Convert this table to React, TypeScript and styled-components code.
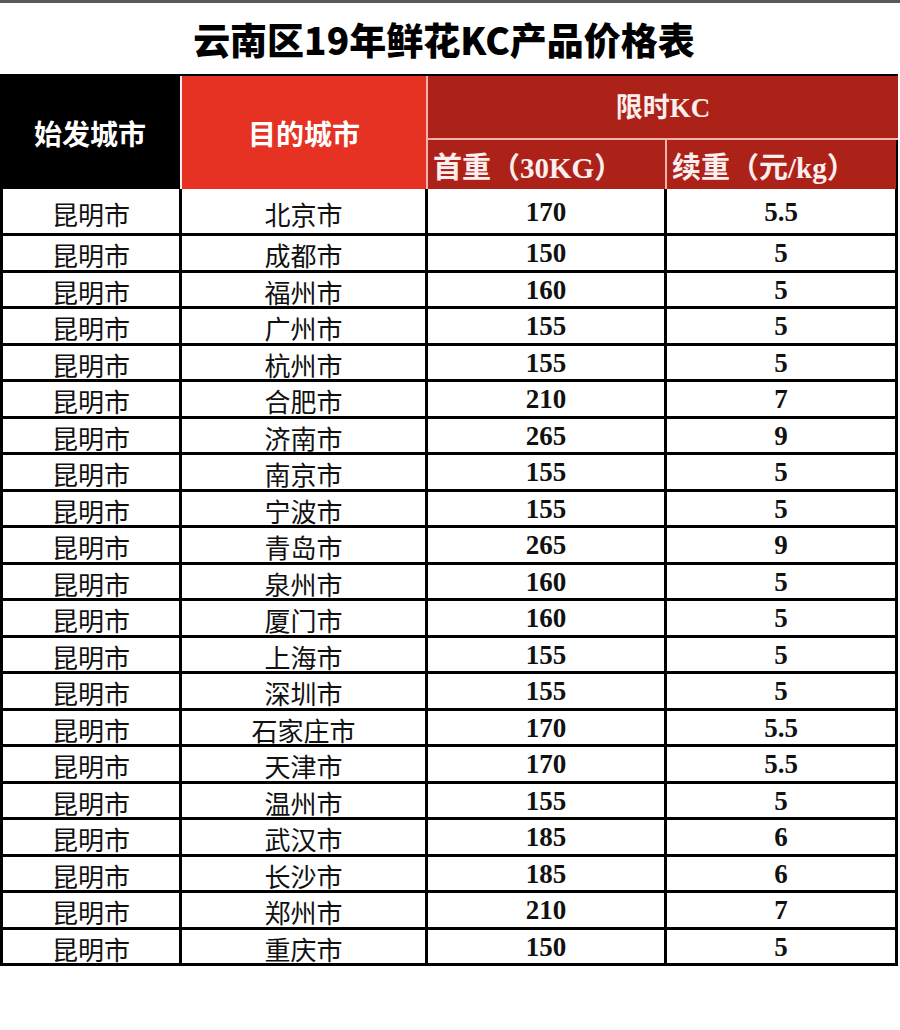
import React from 'react';
import styled, { createGlobalStyle } from 'styled-components';

type Row = { from: string; to: string; first: string; extra: string };

const rows: Row[] = [
  { from: '昆明市', to: '北京市', first: '170', extra: '5.5' },
  { from: '昆明市', to: '成都市', first: '150', extra: '5' },
  { from: '昆明市', to: '福州市', first: '160', extra: '5' },
  { from: '昆明市', to: '广州市', first: '155', extra: '5' },
  { from: '昆明市', to: '杭州市', first: '155', extra: '5' },
  { from: '昆明市', to: '合肥市', first: '210', extra: '7' },
  { from: '昆明市', to: '济南市', first: '265', extra: '9' },
  { from: '昆明市', to: '南京市', first: '155', extra: '5' },
  { from: '昆明市', to: '宁波市', first: '155', extra: '5' },
  { from: '昆明市', to: '青岛市', first: '265', extra: '9' },
  { from: '昆明市', to: '泉州市', first: '160', extra: '5' },
  { from: '昆明市', to: '厦门市', first: '160', extra: '5' },
  { from: '昆明市', to: '上海市', first: '155', extra: '5' },
  { from: '昆明市', to: '深圳市', first: '155', extra: '5' },
  { from: '昆明市', to: '石家庄市', first: '170', extra: '5.5' },
  { from: '昆明市', to: '天津市', first: '170', extra: '5.5' },
  { from: '昆明市', to: '温州市', first: '155', extra: '5' },
  { from: '昆明市', to: '武汉市', first: '185', extra: '6' },
  { from: '昆明市', to: '长沙市', first: '185', extra: '6' },
  { from: '昆明市', to: '郑州市', first: '210', extra: '7' },
  { from: '昆明市', to: '重庆市', first: '150', extra: '5' },
];

const App: React.FC = () => {
  return (
    <Page>
      <GlobalStyle />
      <TopBar />
      <Title>云南区19年鲜花KC产品价格表</Title>
      <Table>
        <colgroup>
          <col style={{ width: 182 }} />
          <col style={{ width: 246 }} />
          <col style={{ width: 239 }} />
          <col style={{ width: 231 }} />
        </colgroup>
        <thead>
          <tr>
            <HeadCell rowSpan={2} $bg="#000000" $right="#f4f0f0">始发城市</HeadCell>
            <HeadCell rowSpan={2} $bg="#e63222" $right="#f2b3aa">目的城市</HeadCell>
            <GroupCell colSpan={2}>限时KC</GroupCell>
          </tr>
          <tr>
            <SubCell $right="#f2b3aa">首重（30KG）</SubCell>
            <SubCell $right="#000000">续重（元/kg）</SubCell>
          </tr>
        </thead>
        <tbody>
          {rows.map((r, i) => (
            <BodyRow key={r.to} $tall={i === 0}>
              <CityCell $first>{r.from}</CityCell>
              <CityCell>{r.to}</CityCell>
              <NumCell>{r.first}</NumCell>
              <NumCell>{r.extra}</NumCell>
            </BodyRow>
          ))}
        </tbody>
      </Table>
    </Page>
  );
};

export default App;

const GlobalStyle = createGlobalStyle`
  html, body {
    margin: 0;
    padding: 0;
    background: #ffffff;
  }
  body {
    font-family: "Noto Sans CJK SC", "Noto Sans", sans-serif;
  }
`;

const Page = styled.div`
  width: 900px;
  height: 1030px;
  background: #ffffff;
  overflow: hidden;
`;

const TopBar = styled.div`
  height: 3px;
  background: #5a5a5a;
`;

const Title = styled.h1`
  margin: 0;
  height: 71px;
  padding: 0 12px 0 0;
  display: flex;
  align-items: center;
  justify-content: center;
  font-family: "Noto Sans CJK SC", sans-serif;
  font-weight: 900;
  font-size: 37px;
  letter-spacing: 0;
  color: #000000;
`;

const Table = styled.table`
  width: 898px;
  table-layout: fixed;
  border-collapse: separate;
  border-spacing: 0;
  border-top: 2px solid #000000;
`;

const HeadCell = styled.th<{ $bg: string; $right: string }>`
  background: ${(p) => p.$bg};
  border-right: 2px solid ${(p) => p.$right};
  color: #ffffff;
  font-family: "Noto Sans CJK SC", sans-serif;
  font-weight: 700;
  font-size: 28px;
  text-align: center;
  vertical-align: middle;
  padding: 0;
`;

const GroupCell = styled.th`
  height: 58px;
  background: #ad2218;
  border-bottom: 2px solid #f2b3aa;
  color: #fbeeee;
  font-family: "Liberation Serif", "Noto Sans CJK SC", serif;
  font-weight: 700;
  font-size: 27px;
  text-align: center;
  vertical-align: middle;
  padding: 0 0 4px;
`;

const SubCell = styled.th<{ $right: string }>`
  height: 49px;
  background: #ad2218;
  border-right: 2px solid ${(p) => p.$right};
  color: #fbeeee;
  font-family: "Liberation Serif", "Noto Sans CJK SC", serif;
  font-weight: 700;
  font-size: 29px;
  text-align: left;
  vertical-align: middle;
  white-space: nowrap;
  padding: 0 0 0 5px;
`;

const BodyRow = styled.tr<{ $tall: boolean }>`
  height: ${(p) => (p.$tall ? '47px' : '36.5px')};
`;

const BaseCell = styled.td`
  border-right: 3px solid #000000;
  border-bottom: 3px solid #000000;
  text-align: center;
  vertical-align: middle;
  padding: 0;
  color: #111111;
  line-height: 1;
  white-space: nowrap;
`;

const CityCell = styled(BaseCell)<{ $first?: boolean }>`
  border-left: ${(p) => (p.$first ? '3px solid #000000' : 'none')};
  font-family: "Noto Sans CJK SC", sans-serif;
  font-weight: 400;
  font-size: 26px;
  padding-top: 5px;
`;

const NumCell = styled(BaseCell)`
  font-family: "Liberation Serif", serif;
  font-weight: 700;
  font-size: 27px;
  padding-top: 2px;
`;
